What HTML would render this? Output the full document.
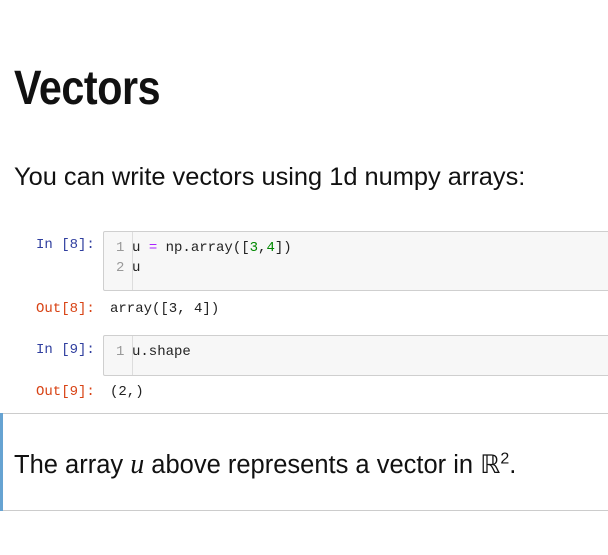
<!DOCTYPE html>
<html><head><style>
body{margin:0;width:608px;height:555px;background:#fff;position:relative;overflow:hidden;font-family:"Liberation Sans",sans-serif;color:#111}
.a{position:absolute;white-space:nowrap}
.mono{font-family:"Liberation Mono",monospace;font-size:14px;color:#222}
.in{color:#303f9f}.out{color:#d84315}
.box{position:absolute;left:103px;right:-2px;background:#f7f7f7;border:1px solid #cfcfcf;border-radius:2px}
.ln{color:#999;display:inline-block;width:16px}
</style></head><body>
<div class="a" style="left:14px;top:61px;font-size:48px;font-weight:bold;transform:scaleX(0.86);transform-origin:left top;letter-spacing:-0.5px">Vectors</div>
<div class="a" style="left:14px;top:163px;font-size:25.4px">You can write vectors using 1d numpy arrays:</div>

<div class="a mono in" style="left:36px;top:237px">In [8]:</div>
<div class="box" style="top:231px;height:58px">
<div style="position:absolute;left:8px;top:0;bottom:0;width:20px;border-right:1px solid #ddd"></div>
<div class="a mono" style="left:12px;top:8px"><span class="ln">1</span>u <span style="color:#aa22ff">=</span> np.array([<span style="color:#080">3</span>,<span style="color:#080">4</span>])</div>
<div class="a mono" style="left:12px;top:28px"><span class="ln">2</span>u</div>
</div>
<div class="a mono out" style="left:36px;top:301px">Out[8]:</div>
<div class="a mono" style="left:110px;top:301px">array([3, 4])</div>

<div class="a mono in" style="left:36px;top:342px">In [9]:</div>
<div class="box" style="top:335px;height:39px">
<div style="position:absolute;left:8px;top:0;bottom:0;width:20px;border-right:1px solid #ddd"></div>
<div class="a mono" style="left:12px;top:8px"><span class="ln">1</span>u.shape</div>
</div>
<div class="a mono out" style="left:36px;top:384px">Out[9]:</div>
<div class="a mono" style="left:110px;top:384px">(2,)</div>

<div class="a" style="left:0;top:413px;width:608px;height:98px;border-top:1px solid #ccc;border-bottom:1px solid #ccc;box-sizing:border-box"></div>
<div class="a" style="left:0;top:413px;width:3px;height:98px;background:#66a3d2"></div>
<div class="a" style="left:14px;top:449px;font-size:25.5px">The array <i style="font-family:'Liberation Serif',serif;font-size:28px">u</i> above represents a vector in <span style="font-family:'DejaVu Sans',sans-serif">ℝ</span><sup style="font-size:16px">2</sup>.</div>
</body></html>
